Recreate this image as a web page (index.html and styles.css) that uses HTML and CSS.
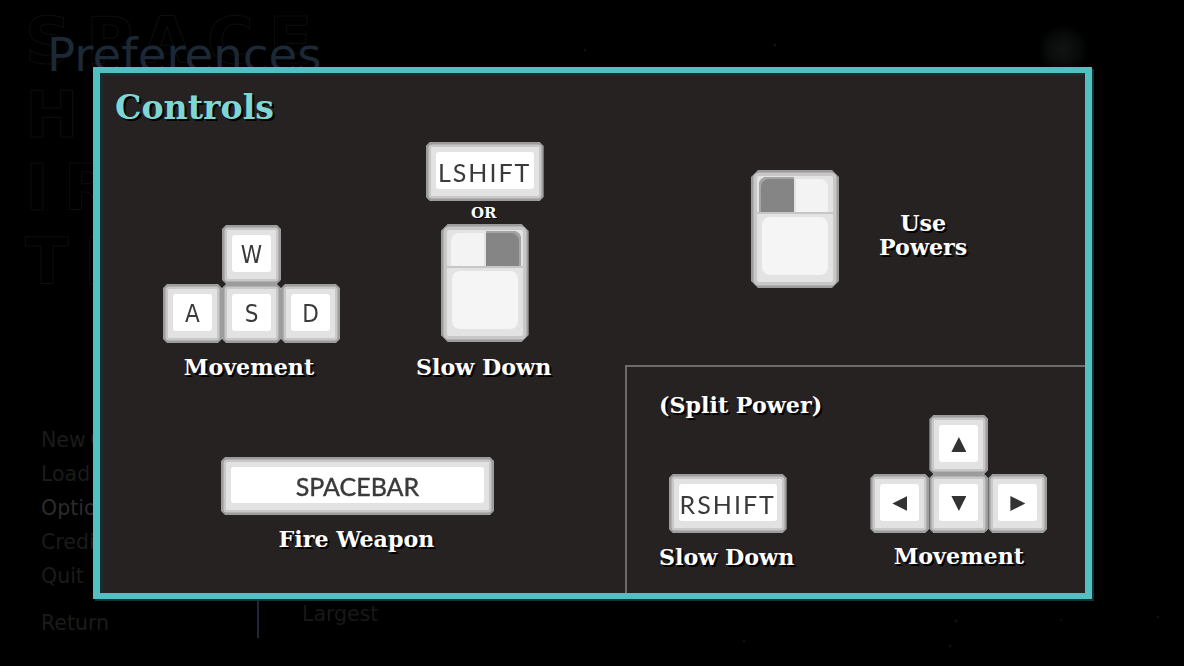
FILE: index.html
```html
<html>
	<head>
		<meta charset="utf-8"/>
		<link rel="stylesheet" href="styles.css">
	</head>
	<body>
		<div class="screen">
			<svg class="stars" width="1184" height="666">
				<circle cx="585" cy="50" r="1.2"/>
				<circle cx="775" cy="45" r="1.4"/>
				<circle cx="744" cy="641" r="1.2"/>
				<circle cx="956" cy="621" r="1.5"/>
				<circle cx="950" cy="646" r="1.2"/>
				<circle cx="1061" cy="620" r="1"/>
				<circle cx="1158" cy="617" r="1.2"/>
			</svg>
			<div class="glow"></div>
			<div class="logo">
				<div>SPACE</div>
				<div>HA</div>
				<div>IR</div>
				<div>TE</div>
			</div>
			<h1 class="page-title">Preferences</h1>
			<div class="columns">
				<div class="menu">
					<div>New Game</div>
					<div>Load Game</div>
					<div class="current">Options</div>
					<div>Credits</div>
					<div>Quit</div>
					<div class="return">Return</div>
				</div>
				<div class="prefs">Largest</div>
			</div>
		</div>

		<div class="panel">
			<div class="left">
				<h2 class="heading">Controls</h2>
				<div class="top-row">
					<div class="group">
						<div class="pad">
							<div class="key cap up">W</div>
							<div class="key cap">A</div>
							<div class="key cap">S</div>
							<div class="key cap">D</div>
						</div>
						<div class="label wasd-label">Movement</div>
					</div>
					<div class="group">
						<div class="key wide">LSHIFT</div>
						<div class="or">OR</div>
						<div class="mouse">
							<div class="btn btn-l"></div>
							<div class="btn btn-r on"></div>
							<div class="body"><div></div></div>
						</div>
						<div class="label">Slow Down</div>
					</div>
				</div>
				<div class="group space-group">
					<div class="key space">SPACEBAR</div>
					<div class="label fire-label">Fire Weapon</div>
				</div>
			</div>
			<div class="right">
				<div class="powers">
					<div class="mouse">
						<div class="btn btn-l on"></div>
						<div class="btn btn-r"></div>
						<div class="body"><div></div></div>
					</div>
					<div class="label">Use<br>Powers</div>
				</div>
				<div class="split">
					<div class="label split-title">(Split Power)</div>
					<div class="split-row">
						<div class="group">
							<div class="key wide">RSHIFT</div>
							<div class="label slow-label">Slow Down</div>
						</div>
						<div class="group">
							<div class="pad">
								<div class="key cap up"><i class="tri t-up"></i></div>
								<div class="key cap"><i class="tri t-left"></i></div>
								<div class="key cap"><i class="tri t-down"></i></div>
								<div class="key cap"><i class="tri t-right"></i></div>
							</div>
							<div class="label">Movement</div>
						</div>
					</div>
				</div>
			</div>
		</div>
	</body>
</html>
```

FILE: styles.css
```css
html, body{
	margin: 0;
	width: 1184px;
	height: 666px;
	overflow: hidden;
	background-color: black;
}
/* dimmed menu screen behind the dialog */
.screen{
	position: relative;
	height: 666px;
	font-family: "DejaVu Sans", sans-serif;
}
.stars{
	position: absolute;
	left: 0;
	top: 0;
	fill: #121212;
}
.glow{
	position: absolute;
	left: 1038px;
	top: 25px;
	width: 50px;
	height: 50px;
	background: radial-gradient(closest-side, #101312 0%, #0a0c0c 55%, #000 100%);
}
.logo{
	position: absolute;
	left: 25px;
	top: 5px;
	font-family: "DejaVu Sans", sans-serif;
	font-weight: bold;
	font-size: 64px;
	line-height: 73.5px;
	letter-spacing: 15px;
	color: black;
	-webkit-text-stroke: 1px #0e0e0e;
}
.page-title{
	position: absolute;
	left: 47px;
	top: 28px;
	margin: 0;
	font-size: 46.7px;
	font-weight: normal;
	color: #1c2835;
}
.columns{
	display: flex;
	align-items: flex-start;
	padding-top: 423px;
}
.menu{
	width: 216px;
	height: 215px;
	padding-left: 41px;
	border-right: 2px solid #1c2b3c;
	font-size: 20.5px;
	line-height: 34px;
	word-spacing: -2px;
	color: #1b1b1b;
}
.current{
	color: #2c2c2c;
}
.return{
	margin-top: 13px;
}
.prefs{
	margin-top: 178px;
	margin-left: 43px;
	font-size: 20.5px;
	line-height: 26px;
	color: #181818;
}
/* dialog */
.panel{
	position: absolute;
	left: 93px;
	top: 67px;
	width: 985px;
	height: 520px;
	display: flex;
	border: solid #52bfc3;
	border-width: 6px 7px;
	background-color: #262222;
	box-shadow: 2px 2px 0 #0f3436, inset 3px 3px 0 #1b2e2f;
	font-family: "DejaVu Serif", serif;
}
.left{
	width: 525px;
	display: flex;
	flex-direction: column;
}
.right{
	width: 460px;
	display: flex;
	flex-direction: column;
}
.heading{
	height: 69px;
	margin: 0;
	padding-left: 15px;
	font-size: 33.2px;
	line-height: 69px;
	color: #7fd6d5;
	text-shadow: 2px 2px 0 black;
}
.label{
	margin-top: 12px;
	font-size: 22.2px;
	font-weight: bold;
	line-height: 26px;
	color: white;
	text-align: center;
	white-space: nowrap;
	text-shadow: 2px 2px 0 black;
}
.wasd-label{
	margin: 11px 5px 0 0;
}
.fire-label{
	margin: 11px 2px 0 0;
}
.top-row{
	display: flex;
	align-items: flex-end;
	gap: 76px;
	padding-left: 63px;
}
.group{
	display: flex;
	flex-direction: column;
	align-items: center;
}
.space-group{
	width: 273px;
	margin: 77px 0 0 121px;
}
.or{
	height: 23px;
	font-size: 15px;
	font-weight: bold;
	line-height: 24px;
	color: white;
	text-shadow: 1px 1px 0 black;
}
.powers{
	height: 292px;
	box-sizing: border-box;
	display: flex;
	align-items: flex-start;
	padding: 97px 0 0 126px;
}
.powers .label{
	margin: 41px 0 0 40px;
	line-height: 24px;
}
.split{
	flex: 1;
	border: solid #6b6b6b;
	border-width: 2px 0 0 2px;
	padding: 26px 0 0 32px;
}
.split-title{
	margin: 0;
	height: 22px;
	line-height: 24px;
	text-align: left;
}
.split-row{
	display: flex;
	align-items: flex-start;
	gap: 76px;
}
.split-row .group:first-child{
	padding-top: 59px;
}
.split-row .label{
	margin-top: 10px;
}
.split-row .slow-label{
	margin-top: 11px;
}
/* keys */
.key{
	box-sizing: border-box;
	position: relative;
	isolation: isolate;
	display: flex;
	align-items: center;
	justify-content: center;
	background-color: #e2e2e2;
	border-radius: 6px;
	box-shadow: inset 0 0 0 2.5px #9c9c9c, inset 0 0 0 5px #c8c8c8;
	clip-path: polygon(4px 0, calc(100% - 4px) 0, 100% 4px, 100% calc(100% - 4px), calc(100% - 4px) 100%, 4px 100%, 0 calc(100% - 4px), 0 4px);
	filter: blur(0.4px);
	font-family: "Lato", sans-serif;
	color: #3a3a3a;
}
.key::before{
	content: "";
	position: absolute;
	inset: 10px 10px 12px 10px;
	z-index: -1;
	background-color: white;
	border-radius: 3px;
}
.pad{
	display: grid;
	grid-template-columns: repeat(3, 59px);
	grid-template-rows: 59px 59px;
}
.pad .key{
	grid-row: 2;
}
.pad .up{
	grid-column: 2;
	grid-row: 1;
}
.cap{
	font-family: "DejaVu Sans Condensed", "DejaVu Sans", sans-serif;
	font-size: 24px;
}
.wide{
	width: 118px;
	height: 59px;
	margin-left: 2px;
	font-size: 25px;
	letter-spacing: 2px;
}
.space{
	width: 273px;
	height: 58px;
	font-size: 25px;
	-webkit-text-stroke: 0.4px #3a3a3a;
}
.tri{
	display: block;
	width: 15px;
	height: 15px;
	background-color: #333;
}
.t-up{
	clip-path: polygon(50% 0, 100% 100%, 0 100%);
}
.t-down{
	clip-path: polygon(0 0, 100% 0, 50% 100%);
}
.t-left{
	clip-path: polygon(0 50%, 100% 0, 100% 100%);
}
.t-right{
	clip-path: polygon(0 0, 100% 50%, 0 100%);
}
/* mouse */
.mouse{
	box-sizing: border-box;
	width: 88px;
	height: 118px;
	margin-left: 2px;
	padding: 6px;
	display: grid;
	grid-template-columns: 38px 38px;
	grid-template-rows: 36px 70px;
	background-color: #e3e3e3;
	border-radius: 8px;
	box-shadow: inset 0 0 0 2.5px #9c9c9c, inset 0 0 0 6px #c8c8c8;
	clip-path: polygon(7px 0, calc(100% - 7px) 0, 100% 7px, 100% calc(100% - 7px), calc(100% - 7px) 100%, 7px 100%, 0 calc(100% - 7px), 0 7px);
	filter: blur(0.4px);
}
.powers .mouse{
	margin-left: 0;
}
.btn{
	background-color: #f3f3f3;
}
.btn-l{
	margin: 3px 1px 0 4px;
	border-top-left-radius: 8px;
}
.btn-r{
	margin: 3px 5px 0 1px;
	border-top-right-radius: 8px;
}
.btn.on{
	background-color: #858585;
}
.btn-l.on{
	margin: 1px 1px 0 2px;
	box-shadow: inset 2px 2px 0 #a5a5a5;
}
.btn-r.on{
	margin: 1px 2px 0 1px;
	box-shadow: inset -2px 2px 0 #a5a5a5;
}
.body{
	grid-column: 1 / 3;
	box-sizing: border-box;
	padding: 3px 5px 7px;
	border-top: 2px solid #c6c6c6;
}
.body div{
	height: 100%;
	background-color: #f5f5f5;
	border-radius: 8px;
}
```
